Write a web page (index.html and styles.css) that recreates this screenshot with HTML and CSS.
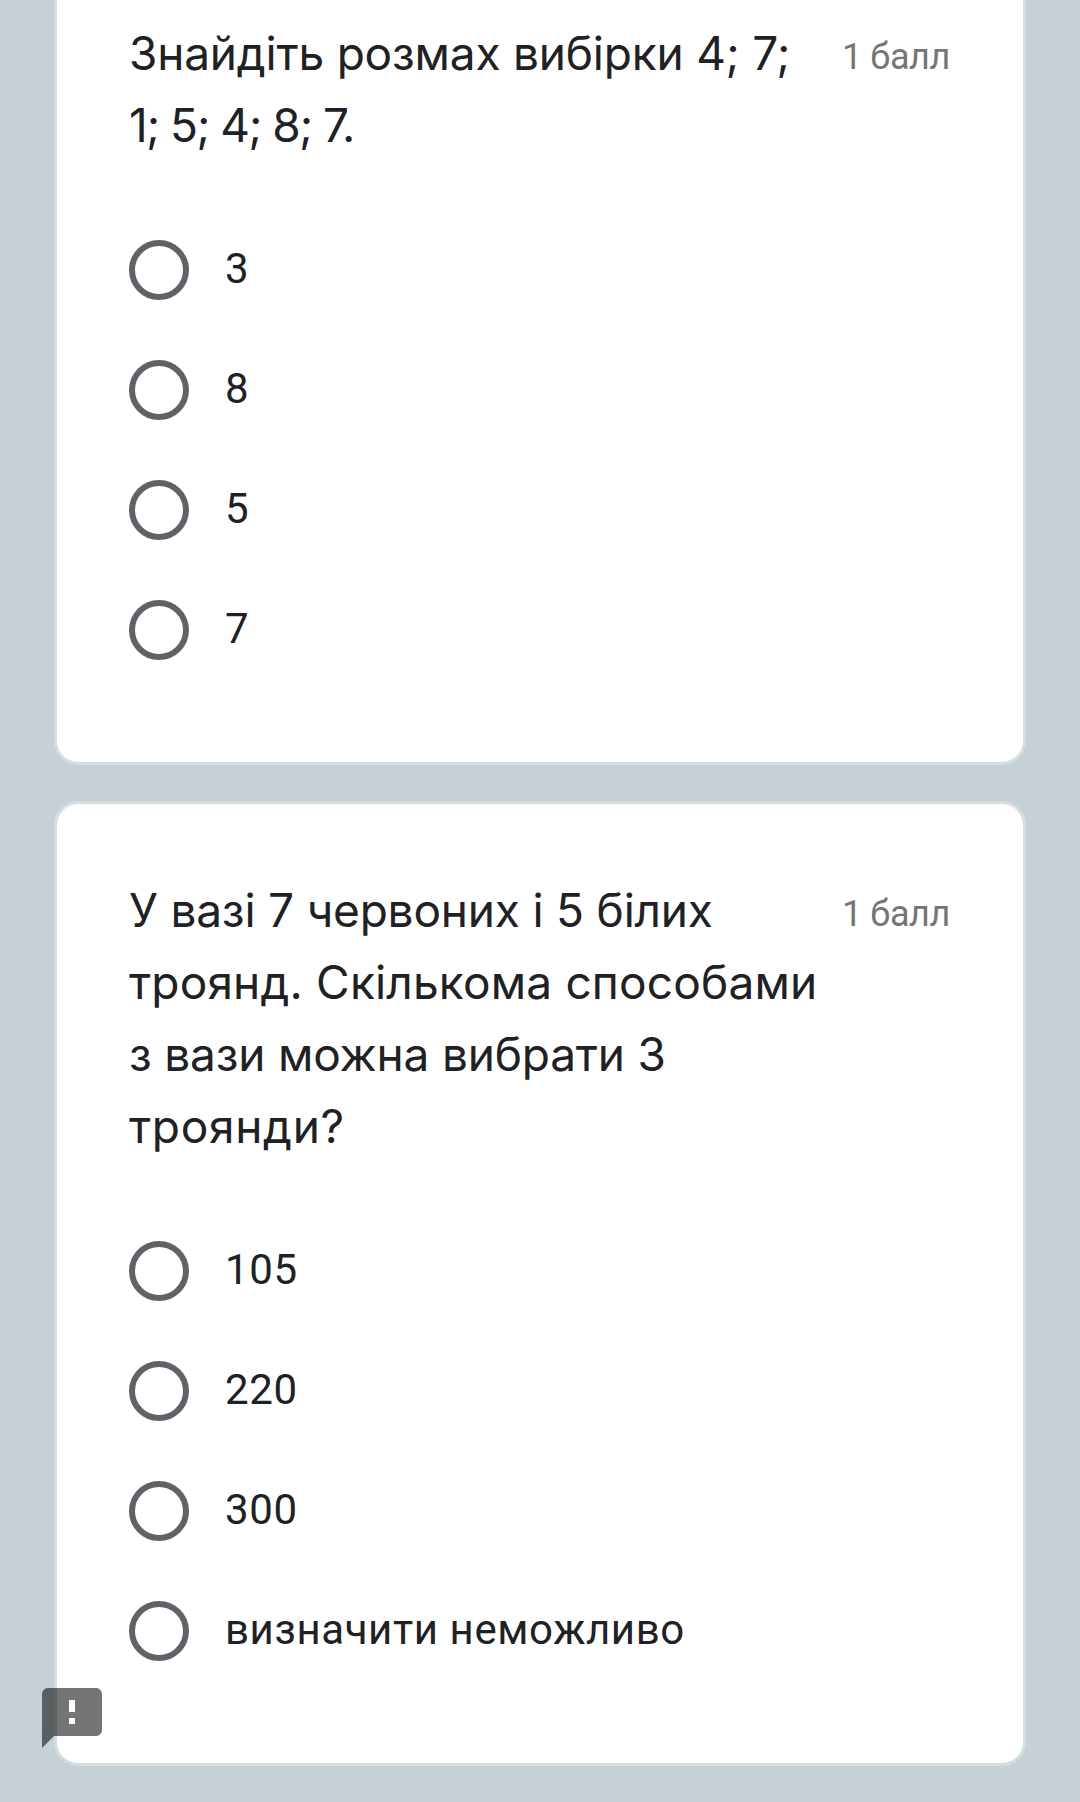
FILE: index.html
```html
<!DOCTYPE html>
<html lang="uk">
<head>
  <meta charset="UTF-8" />
  <meta name="viewport" content="width=device-width, initial-scale=1.0"/>
  <title>Тест</title>
  <link rel="stylesheet" href="styles.css">
</head>
<body>

  <main class="form">
    <section class="card">
      <div class="question">
        <h2 class="title">Знайдіть розмах вибірки 4; 7;<br><span class="numbers">1; 5; 4; 8; 7.</span></h2>
        <span class="points">1 балл</span>
      </div>
      <div class="options">
        <label class="option"><input type="radio" name="q1"><span>3</span></label>
        <label class="option"><input type="radio" name="q1"><span>8</span></label>
        <label class="option"><input type="radio" name="q1"><span>5</span></label>
        <label class="option"><input type="radio" name="q1"><span>7</span></label>
      </div>
    </section>

    <section class="card">
      <div class="question">
        <h2 class="title">У вазі 7 червоних і 5 білих<br><span class="wide">троянд. Скількома способами</span><br>з вази можна вибрати 3<br><span class="wider">троянди?</span></h2>
        <span class="points">1 балл</span>
      </div>
      <div class="options">
        <label class="option"><input type="radio" name="q2"><span>105</span></label>
        <label class="option"><input type="radio" name="q2"><span>220</span></label>
        <label class="option"><input type="radio" name="q2"><span>300</span></label>
        <label class="option"><input type="radio" name="q2"><span>визначити неможливо</span></label>
      </div>
    </section>
  </main>

  <button class="feedback">
    <svg viewBox="0 0 24 24" width="72" height="72"><path d="M20 2H4c-1.1 0-1.99.9-1.99 2L2 22l4-4h14c1.1 0 2-.9 2-2V4c0-1.1-.9-2-2-2zm-7 12h-2v-2h2v2zm0-4h-2V6h2v4z"/></svg>
  </button>

</body>
</html>
```
FILE: styles.css
```css
* {
  box-sizing: border-box;
}

body {
  margin: 0;
  height: 1802px;
  overflow: hidden;
  background: #c5d1d6;
  font-family: Roboto, sans-serif;
  color: #202124;
}

.form {
  display: flex;
  flex-direction: column;
  gap: 36px;
  /* scrolled so that the first card starts above the window */
  margin: -56px 54px 0;
}

.card {
  background: #fff;
  border: 3px solid #d5dde0;
  border-radius: 24px;
  padding: 70px 72px 102px;
}

.question {
  display: flex;
  justify-content: space-between;
  margin-bottom: 79px;
}

.title {
  margin: 0;
  font-family: Inter, sans-serif;
  font-size: 46px;
  line-height: 72px;
  font-weight: 400;
  letter-spacing: -0.2px;
  white-space: nowrap;
}

.numbers {
  letter-spacing: -1.5px;
}

.wide {
  letter-spacing: 0.18px;
}

.wider {
  letter-spacing: 0.7px;
}

.points {
  width: 109px;
  flex: none;
  font-size: 36px;
  line-height: 72px;
  letter-spacing: -0.4px;
  color: #757575;
  white-space: nowrap;
  padding-top: 4px;
}

.options {
  display: flex;
  flex-direction: column;
  gap: 60px;
}

.option {
  display: flex;
  align-items: center;
  gap: 36px;
  height: 60px;
  font-size: 42px;
  line-height: 60px;
  letter-spacing: 0.6px;
}

.option span {
  padding-bottom: 2px;
}

.option input {
  appearance: none;
  width: 60px;
  height: 60px;
  margin: 0;
  border: 6px solid #5f6368;
  border-radius: 50%;
}

.option input:checked {
  border-width: 18px;
}

.feedback {
  position: fixed;
  left: 36px;
  top: 1682px;
  width: 72px;
  height: 72px;
  padding: 0;
  border: none;
  background: none;
  cursor: pointer;
}

.feedback svg {
  display: block;
  fill: rgba(0, 0, 0, 0.54);
}
```
